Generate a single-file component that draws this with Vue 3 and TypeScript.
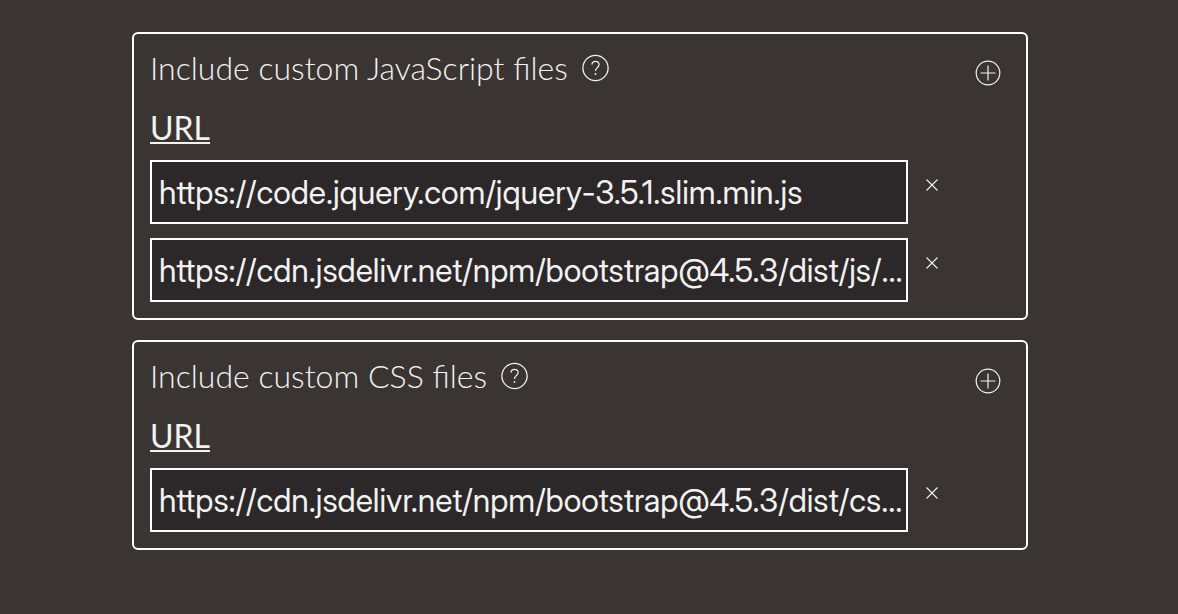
<script setup lang="ts">
import { ref } from 'vue'

interface FileGroup {
  id: string
  title: string
  urls: string[]
}

const groups = ref<FileGroup[]>([
  {
    id: 'js',
    title: 'Include custom JavaScript files',
    urls: [
      'https://code.jquery.com/jquery-3.5.1.slim.min.js',
      'https://cdn.jsdelivr.net/npm/bootstrap@4.5.3/dist/js/bootstrap.bundle.min.js',
    ],
  },
  {
    id: 'css',
    title: 'Include custom CSS files',
    urls: ['https://cdn.jsdelivr.net/npm/bootstrap@4.5.3/dist/css/bootstrap.min.css'],
  },
])

function addUrl(group: FileGroup) {
  group.urls.push('')
}

function removeUrl(group: FileGroup, index: number) {
  group.urls.splice(index, 1)
}
</script>

<template>
  <main class="page">
    <section v-for="group in groups" :key="group.id" class="panel" :aria-labelledby="`${group.id}-title`">
      <header class="head">
        <h2 :id="`${group.id}-title`" class="title">{{ group.title }}</h2>
        <button type="button" class="icon-button" aria-label="Help">
          <svg width="28" height="28" viewBox="0 0 28 28" fill="none" stroke="currentColor">
            <circle cx="13.5" cy="14" r="12.6" stroke-width="1.3" />
            <path d="M9.9 10.6C10.1 8.6 11.5 7.4 13.5 7.4c2.1 0 3.6 1.3 3.6 3.2 0 1.5-.8 2.3-1.9 3.1-1.2.9-1.7 1.5-1.7 3.2" stroke-width="1.2" />
            <circle cx="13.5" cy="20" r=".9" fill="currentColor" stroke="none" />
          </svg>
        </button>
        <button type="button" class="icon-button add" aria-label="Add file" @click="addUrl(group)">
          <svg width="26" height="26" viewBox="0 0 26 26" fill="none" stroke="currentColor" stroke-width="1.2">
            <circle cx="13" cy="13" r="11.8" />
            <path d="M13 5.5v15M5.5 13h15" />
          </svg>
        </button>
      </header>
      <label class="column-label" :for="`${group.id}-url-0`">URL</label>
      <ul class="rows">
        <li v-for="(_, i) in group.urls" :key="i" class="row">
          <input
            :id="`${group.id}-url-${i}`"
            v-model="group.urls[i]"
            class="field"
            type="text"
            spellcheck="false"
            :aria-label="`URL ${i + 1}`"
          />
          <button type="button" class="icon-button remove" aria-label="Remove file" @click="removeUrl(group, i)">
            <svg width="12" height="12" viewBox="0 0 12 12" fill="none" stroke="currentColor" stroke-width="1.1">
              <path d="M.5.5l11 11M11.5.5l-11 11" />
            </svg>
          </button>
        </li>
      </ul>
    </section>
  </main>
</template>

<style>
body {
  background: #3a3432;
}
</style>

<style scoped>
.page {
  display: flex;
  flex-direction: column;
  gap: 20px;
  padding: 32px 150px 32px 132px;
  color: #f2f2f2;
  font-family: Lato, "Open Sans", sans-serif;
  font-size: 32px;
}

.panel {
  box-sizing: border-box;
  padding: 14px 16px 16px;
  border: 2px solid #fff;
  border-radius: 6px;
}

.head {
  display: flex;
  align-items: center;
}

.title {
  margin: 0 14px 0 0;
  font-size: 32px;
  font-weight: 300;
  line-height: 40px;
}

.icon-button {
  display: block;
  padding: 0;
  border: 0;
  background: none;
  color: #f2f2f2;
  cursor: pointer;
}

.icon-button svg {
  display: block;
}

.add {
  margin: 10px 9px 0 auto;
}

.column-label {
  display: inline-block;
  margin: 20px 0 12px;
  line-height: 40px;
  text-decoration: underline;
  text-decoration-thickness: 2px;
  text-underline-offset: 2px;
  text-decoration-skip-ink: none;
}

.rows {
  display: flex;
  flex-direction: column;
  gap: 14px;
  margin: 0;
  padding: 0;
  list-style: none;
}

.row {
  display: grid;
  grid-template-columns: minmax(0, 1fr) 84px;
  column-gap: 18px;
  align-items: start;
}

.field {
  box-sizing: border-box;
  width: 100%;
  height: 64px;
  padding: 0 1px 0 7px;
  border: 2px solid #fff;
  border-radius: 0;
  outline: none;
  background: #2c2729;
  color: #f2f2f2;
  font-family: "Inter Display", Inter, "Liberation Sans", sans-serif;
  font-size: 32px;
  text-overflow: ellipsis;
}

.remove {
  justify-self: start;
  margin-top: 19px;
}
</style>
